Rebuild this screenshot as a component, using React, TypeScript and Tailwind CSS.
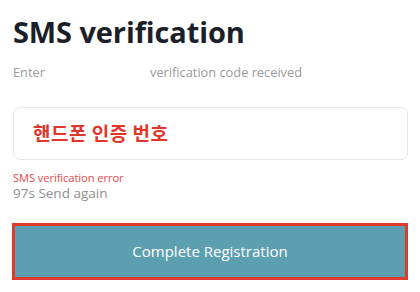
export default function App() {
  return (
    <div className="w-[420px] h-[292px] bg-white px-[12px] font-['Open_Sans',sans-serif]">
      <h1 className="pt-[13px] pl-px text-[29px] leading-[37px] font-bold text-[#1c1f2a] tracking-[-0.1px]">
        SMS verification
      </h1>
      <p className="mt-[14px] pl-px flex text-[12.8px] leading-[16px] text-[#9a9a9a]">
        <span className="w-[137px]">Enter</span>
        <span>verification code received</span>
      </p>
      <div className="mt-[27px] ml-px h-[53px] w-[395px] rounded-[7px] border border-[#e6e6e6] flex items-center pl-[19px]">
        <span className="text-[19px] font-bold text-[#e2362b] tracking-[0.5px] font-['Noto_Sans_CJK_KR',sans-serif]">
          핸드폰 인증 번호
        </span>
      </div>
      <p className="mt-[10px] pl-px text-[11.2px] leading-[15px] text-[#e8484a] tracking-[-0.1px]">SMS verification error</p>
      <p className="pl-px text-[13.5px] leading-[17px] text-[#8e8e8e]">97s Send again</p>
      <button className="mt-[21px] w-[396px] h-[57px] border-[3px] border-[#de3a2e] bg-[#5c9fb0] text-white text-[15px] font-medium flex items-center justify-center">
        Complete Registration
      </button>
    </div>
  );
}
